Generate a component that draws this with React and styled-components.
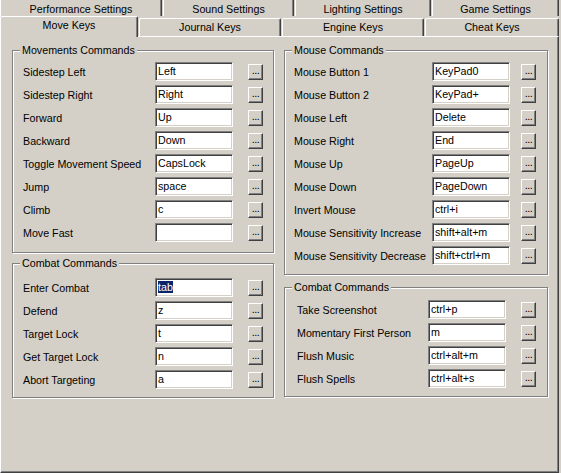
import React from 'react'
import styled, { createGlobalStyle } from 'styled-components'

const GlobalStyle = createGlobalStyle`
    body {
        margin: 0;
        background: #d4d0c8;
        font-family: "Liberation Sans", Arial, sans-serif;
        font-size: 10.7px;
        color: #000;
    }
`

const Dialog = styled.div`
    width: 561px;
    height: 473px;
    overflow: hidden;
    background: #d4d0c8;
`

const TabRow = styled.div`
    display: flex;
    gap: 1px;
    width: 559px;
    height: ${p => p.$h}px;
    align-items: flex-end;
`

const Tab = styled.div`
    position: relative;
    box-sizing: border-box;
    flex: 0 0 ${p => p.$w}px;
    height: ${p => (p.$active ? 21 : p.$back ? 16 : 18)}px;
    margin-bottom: ${p => (p.$active ? -1 : 0)}px;
    z-index: ${p => (p.$active ? 2 : 0)};
    background: #d4d0c8;
    border-left: 1px solid #fff;
    border-top: ${p => (p.$back ? 'none' : '1px solid #fff')};
    border-right: 1px solid #404040;
    border-radius: ${p => (p.$back ? '0' : '2px 2px 0 0')};
    box-shadow: inset -1px 0 0 #808080;
    padding-top: ${p => (p.$back ? 3 : 2)}px;
    text-align: center;
    line-height: 13px;
    white-space: nowrap;
`

const Panel = styled.div`
    box-sizing: border-box;
    width: 559px;
    height: 437px;
    border: 1px solid;
    border-color: #fff #404040 #404040 #fff;
    box-shadow: inset -1px -1px 0 #808080;
    padding: 13px 0 0 11px;
    display: flex;
    gap: 10px;
    align-items: flex-start;
`

const Column = styled.div`
    display: flex;
    flex-direction: column;
    gap: ${p => p.$gap}px;
`

const Group = styled.div`
    box-sizing: border-box;
    width: ${p => p.$w}px;
    border: 1px solid #808080;
    box-shadow: inset 1px 1px 0 #fff, 1px 1px 0 #fff;
    padding: 0 0 ${p => p.$padB}px ${p => p.$padL}px;
    display: flex;
    flex-direction: column;
`

const Title = styled.div`
    align-self: flex-start;
    margin: -7px 0 0 ${p => 7 - p.$padL}px;
    padding: 0 2px;
    background: #d4d0c8;
    line-height: 13px;
    white-space: nowrap;
`

const Rows = styled.div`
    display: flex;
    flex-direction: column;
    gap: 4px;
    margin-top: ${p => p.$top}px;
`

const Row = styled.div`
    display: flex;
    align-items: center;
    height: 19px;
`

const Label = styled.div`
    flex: 0 0 ${p => p.$w}px;
    padding-top: 1px;
    white-space: nowrap;
`

const KeyBox = styled.div`
    box-sizing: border-box;
    flex: 0 0 78px;
    height: 19px;
    background: #fff;
    border: 1px solid;
    border-color: #808080 #fff #fff #808080;
    box-shadow: inset 1px 1px 0 #404040, inset -1px -1px 0 #d4d0c8;
    padding: 1px 0 0 2px;
    line-height: 15px;
    white-space: nowrap;
    overflow: hidden;
`

const Highlight = styled.span`
    background: #0a246a;
    color: #fff;
`

const DotButton = styled.div`
    box-sizing: border-box;
    flex: 0 0 15px;
    height: 16px;
    margin: 1px 0 0 ${p => p.$gap}px;
    background: #d4d0c8;
    border: 1px solid;
    border-color: #fff #404040 #404040 #fff;
    box-shadow: inset -1px -1px 0 #808080;
    text-align: center;
    font-size: 11px;
    line-height: 11px;
    letter-spacing: -0.5px;
`

const backTabs = [
    ['Performance Settings', 162],
    ['Sound Settings', 131],
    ['Lighting Settings', 136],
    ['Game Settings', 127],
]

const frontTabs = [
    ['Move Keys', 138],
    ['Journal Keys', 142],
    ['Engine Keys', 142],
    ['Cheat Keys', 134],
]

const movement = [
    ['Sidestep Left', 'Left'],
    ['Sidestep Right', 'Right'],
    ['Forward', 'Up'],
    ['Backward', 'Down'],
    ['Toggle Movement Speed', 'CapsLock'],
    ['Jump', 'space'],
    ['Climb', 'c'],
    ['Move Fast', ''],
]

const combatLeft = [
    ['Enter Combat', 'tab', true],
    ['Defend', 'z'],
    ['Target Lock', 't'],
    ['Get Target Lock', 'n'],
    ['Abort Targeting', 'a'],
]

const mouse = [
    ['Mouse Button 1', 'KeyPad0'],
    ['Mouse Button 2', 'KeyPad+'],
    ['Mouse Left', 'Delete'],
    ['Mouse Right', 'End'],
    ['Mouse Up', 'PageUp'],
    ['Mouse Down', 'PageDown'],
    ['Invert Mouse', 'ctrl+i'],
    ['Mouse Sensitivity Increase', 'shift+alt+m'],
    ['Mouse Sensitivity Decrease', 'shift+ctrl+m'],
]

const combatRight = [
    ['Take Screenshot', 'ctrl+p'],
    ['Momentary First Person', 'm'],
    ['Flush Music', 'ctrl+alt+m'],
    ['Flush Spells', 'ctrl+alt+s'],
]

const KeyGroup = ({ title, items, w, padL, padB, labelW, gap, top }) => (
    <Group $w={w} $padL={padL} $padB={padB}>
        <Title $padL={padL}>{title}</Title>
        <Rows $top={top}>
            {items.map(([name, key, sel]) => (
                <Row key={name}>
                    <Label $w={labelW}>{name}</Label>
                    <KeyBox>{sel ? <Highlight>{key}</Highlight> : key}</KeyBox>
                    <DotButton $gap={gap}>...</DotButton>
                </Row>
            ))}
        </Rows>
    </Group>
)

const App = () => {
    return (
        <Dialog>
            <GlobalStyle />
            <TabRow $h={16}>
                {backTabs.map(([t, w]) => (
                    <Tab key={t} $w={w} $back>{t}</Tab>
                ))}
            </TabRow>
            <TabRow $h={20}>
                {frontTabs.map(([t, w], i) => (
                    <Tab key={t} $w={w} $active={i === 0}>{t}</Tab>
                ))}
            </TabRow>
            <Panel>
                <Column $gap={10}>
                    <KeyGroup title="Movements Commands" items={movement}
                        w={262} padL={10} padB={10} labelW={132} gap={15} top={5} />
                    <KeyGroup title="Combat Commands" items={combatLeft}
                        w={262} padL={10} padB={8} labelW={132} gap={15} top={8} />
                </Column>
                <Column $gap={12}>
                    <KeyGroup title="Mouse Commands" items={mouse}
                        w={264} padL={9} padB={9} labelW={138} gap={11} top={5} />
                    <KeyGroup title="Combat Commands" items={combatRight}
                        w={264} padL={12} padB={8} labelW={131} gap={15} top={6} />
                </Column>
            </Panel>
        </Dialog>
    )
}

export default App
